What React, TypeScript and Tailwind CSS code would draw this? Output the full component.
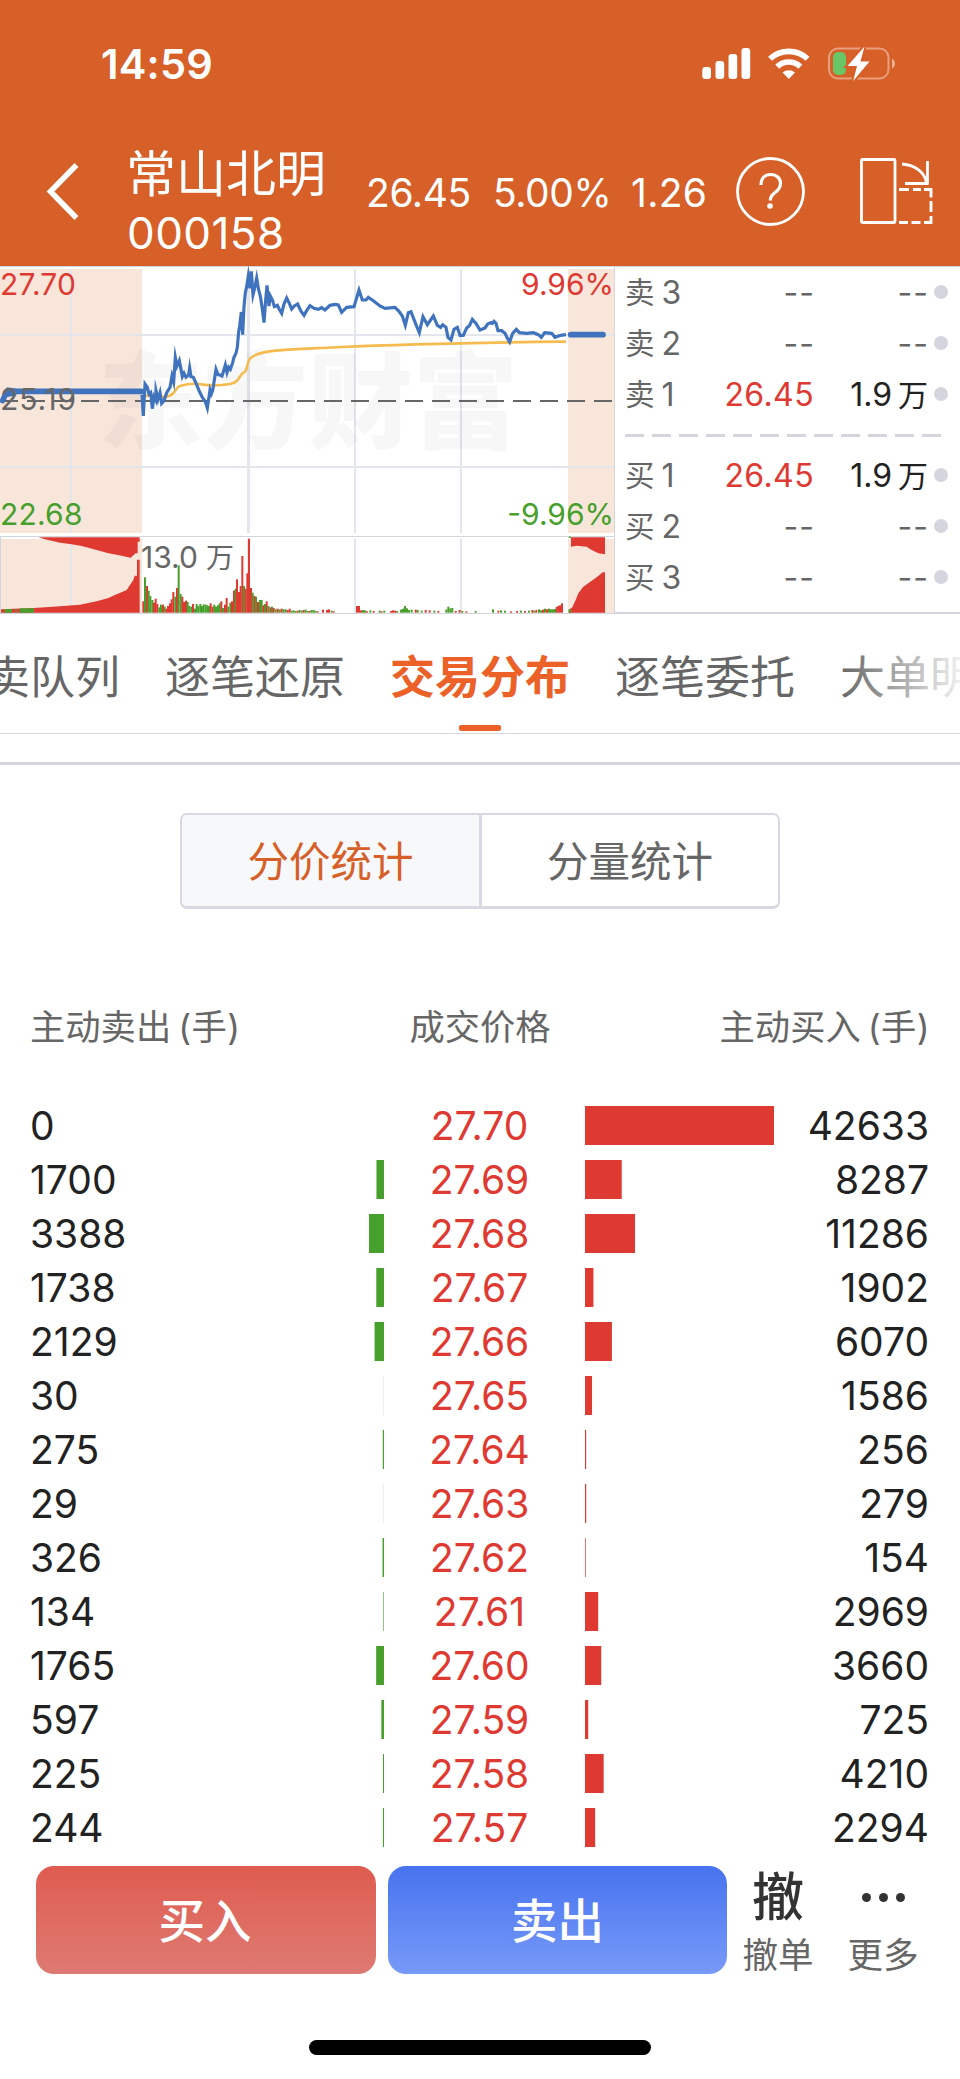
const rows: [number, string, number][] = [
  [0, "27.70", 42633],
  [1700, "27.69", 8287],
  [3388, "27.68", 11286],
  [1738, "27.67", 1902],
  [2129, "27.66", 6070],
  [30, "27.65", 1586],
  [275, "27.64", 256],
  [29, "27.63", 279],
  [326, "27.62", 154],
  [134, "27.61", 2969],
  [1765, "27.60", 3660],
  [597, "27.59", 725],
  [225, "27.58", 4210],
  [244, "27.57", 2294],
];

const MAX_VOLUME = 42633;
const BAR_WIDTH = 189;

const RED = "#df3a32";
const GREEN = "#479f2c";
const GRID = "#e4e6ee";

function StatusBar() {
  return (
    <div className="flex h-[128px] items-center pl-[101px] pr-[64px]">
      <span className="pt-[2px] text-[41.5px] font-semibold leading-none tracking-[0.2px]">14:59</span>
      <svg className="ml-auto" width="196" height="36" viewBox="700 46 196 36" fill="#fff">
        <rect x="702.300" y="67" width="8.700" height="12" rx="3" />
        <rect x="715.500" y="61" width="8.700" height="18" rx="3" />
        <rect x="728.500" y="54" width="8.700" height="25" rx="3" />
        <rect x="741.500" y="48" width="8.700" height="31" rx="3" />
        <g fill="none" stroke="#fff" strokeWidth="5.6">
          <path d="M770 58.8a27.4 27.4 0 0 1 37.6 0" />
          <path d="M777.2 66.6a17 17 0 0 1 23.2 0" />
        </g>
        <path d="M782.6 72.6a9.3 9.3 0 0 1 12.4 0L788.8 79z" />
        <rect x="829" y="48.5" width="59.5" height="30" rx="9" fill="none" stroke="#fff" strokeOpacity=".4" strokeWidth="2" />
        <path d="M892 58.500c4 2 4 8 0 10z" fillOpacity=".5" />
        <rect x="833" y="52" width="13" height="23" rx="5" fill="#68c667" />
        <path d="M864.500 46.500 847.500 66h9.500l-3.800 15L869.500 61.500h-9z" stroke="#d75f28" strokeWidth="4" />
        <path d="M864.500 46.500 847.500 66h9.500l-3.800 15L869.500 61.500h-9z" />
      </svg>
    </div>
  );
}

function TitleBar() {
  return (
    <div className="flex h-[127px] items-center">
      <svg className="ml-[46px]" width="34" height="58" viewBox="0 0 34 58" fill="none" stroke="#fff" strokeWidth="5.5">
        <path d="M30.500 2 4.500 28.500l26 26.500" />
      </svg>
      <div className="ml-[46px] mt-[22px] flex w-[240px] flex-col">
        <span className="h-[61px] text-[50px] leading-[62px]">常山北明</span>
        <span className="h-[58px] pl-[1px] text-[44px] leading-[58px] tracking-[0.4px]">000158</span>
      </div>
      <div className="mt-[2px] flex w-[368px] text-[39px] leading-none tracking-[-0.4px]">
        <span className="w-[127px]">26.45</span>
        <span className="w-[138px]">5.00%</span>
        <span className="tracking-[0.3px]">1.26</span>
      </div>
      <svg className="-mt-[1px]" width="200" height="76" viewBox="734 153 200 76" fill="none" stroke="#fff" strokeWidth="2.800">
        <circle cx="770.500" cy="191.500" r="33" />
        <path strokeWidth="3.200" d="M761 185c0-6.500 4-10.500 9.700-10.500 5.800 0 9.800 3.600 9.800 9 0 4.500-2.300 6.800-5.700 9.300-3.500 2.600-4.500 4.200-4.500 7.700" />
        <circle cx="770" cy="206" r="2.800" fill="#fff" stroke="none" />
        <rect x="861.500" y="159.500" width="33.500" height="63" rx="1" />
        <path d="M902 164c14 1 23 9 24.500 19M927.500 161v22.500M905 183.500h23.500" />
        <path d="M899 189.500h10M913 189.500h8M924 189.500h7v8M931 201v11M931 216v6.500h-7M899 222.500h9M911.500 222.500h9" />
      </svg>
    </div>
  );
}

const priceLine =
  "426,404 430,468 435,372 442,382 447,402 452,398 457,446 462,410 467,420 468,392 474,418 480,398 485,430 492,422 500,398 510,382 516,348 521,366 526,292 531,318 538,302 547,350 552,340 558,352 566,345 569,324 573,350 580,352 590,374 598,394 607,412 616,425 622,444 630,390 634,402 638,392 648,328 654,344 660,345 666,348 671,332 676,315 681,338 686,322 691,328 698,308 702,292 708,280 712,262 716,215 719,198 724,156 728,224 732,140 736,98 740,80 745,48 750,85 754,34 759,104 765,80 770,54 776,90 781,108 786,140 792,188 797,120 801,76 807,138 811,108 818,122 823,140 832,136 838,148 845,160 852,132 860,114 868,130 875,147 883,138 893,132 902,152 912,166 920,152 930,137 942,145 955,148 965,143 975,150 990,136 1005,133 1015,135 1025,157 1040,142 1062,140 1077,90 1087,120 1098,120 1105,112 1120,122 1140,138 1155,145 1185,142 1197,154 1207,168 1216,196 1225,158 1233,155 1248,194 1258,218 1269,170 1282,194 1300,168 1312,196 1322,202 1328,194 1338,202 1344,232 1353,240 1362,208 1372,202 1380,226 1390,226 1400,204 1409,196 1417,178 1428,190 1440,210 1455,204 1463,192 1472,188 1477,190 1482,184 1488,190 1494,212 1505,212 1515,220 1523,236 1529,246 1538,220 1549,208 1558,218 1580,220 1600,218 1615,224 1624,232 1634,218 1655,220 1665,232 1682,226 1698,224";

const averageLine =
  "M438,408C455,404 480,414 500,410C530,404 524,382 540,378C560,372 590,370 610,374C640,378 665,376 690,372C725,364 712,346 736,334C745,318 740,306 750,296C775,272 830,270 960,264C1060,260 1200,250 1698,245";

const volumeBars: [number, number, "r" | "g"][] = [
  [427, 34, "r"], [432, 106, "g"], [438, 80, "r"], [443, 66, "g"], [448, 50, "g"], [454, 38, "g"], [459, 30, "r"], [464, 42, "r"], [469, 26, "r"],
  [475, 16, "g"], [480, 24, "g"], [486, 24, "r"], [491, 18, "g"], [496, 12, "r"], [501, 20, "r"], [507, 28, "r"], [512, 40, "r"], [517, 62, "r"],
  [523, 48, "g"], [528, 74, "r"], [533, 142, "g"], [539, 56, "g"], [544, 48, "r"], [549, 32, "r"], [555, 36, "r"], [560, 32, "g"], [565, 20, "g"],
  [571, 18, "g"], [576, 26, "r"], [582, 12, "g"], [587, 26, "g"], [592, 20, "g"], [598, 26, "g"], [603, 20, "g"], [608, 25, "g"], [614, 24, "g"],
  [619, 22, "g"], [624, 20, "g"], [629, 28, "r"], [635, 18, "r"], [640, 24, "g"], [645, 18, "g"], [651, 22, "g"], [656, 28, "g"], [661, 34, "r"],
  [666, 14, "g"], [672, 24, "r"], [677, 44, "r"], [682, 18, "g"], [688, 30, "g"], [693, 34, "r"], [699, 66, "r"], [704, 72, "g"], [708, 100, "r"],
  [714, 62, "r"], [719, 80, "r"], [724, 170, "r"], [729, 80, "g"], [734, 72, "r"], [739, 118, "r"], [744, 222, "r"], [750, 74, "r"], [755, 60, "g"],
  [760, 50, "r"], [765, 48, "g"], [771, 32, "r"], [777, 38, "g"], [782, 38, "g"], [787, 22, "r"], [792, 26, "g"], [797, 34, "r"], [802, 20, "g"],
  [808, 16, "r"], [813, 18, "g"], [818, 14, "r"], [824, 10, "g"], [830, 12, "r"], [836, 10, "g"], [842, 12, "r"], [848, 10, "g"], [854, 10, "g"],
  [860, 8, "r"], [866, 12, "r"], [872, 6, "g"], [878, 7, "g"], [884, 5, "g"], [890, 6, "r"], [896, 8, "g"], [902, 6, "g"], [908, 8, "r"],
  [914, 9, "g"], [920, 5, "g"], [926, 5, "r"], [932, 8, "g"], [938, 8, "g"], [944, 5, "g"], [950, 4, "r"], [966, 9, "r"], [978, 8, "r"],
  [984, 10, "r"], [992, 6, "g"], [998, 4, "r"], [1068, 20, "r"], [1074, 20, "r"], [1080, 7, "r"], [1086, 8, "g"], [1092, 7, "g"], [1098, 4, "r"],
  [1108, 7, "g"], [1118, 5, "r"], [1136, 6, "g"], [1142, 4, "r"], [1150, 6, "g"], [1170, 5, "r"], [1176, 7, "r"], [1182, 6, "r"], [1188, 5, "g"],
  [1200, 9, "g"], [1206, 12, "g"], [1212, 20, "g"], [1218, 13, "g"], [1224, 8, "g"], [1232, 9, "g"], [1244, 9, "r"], [1250, 8, "g"], [1262, 6, "g"],
  [1274, 8, "r"], [1286, 7, "r"], [1300, 6, "g"], [1312, 5, "r"], [1336, 9, "g"], [1342, 18, "g"], [1348, 13, "g"], [1354, 14, "g"], [1364, 5, "r"],
  [1376, 8, "r"], [1384, 5, "g"], [1396, 4, "r"], [1424, 5, "g"], [1476, 10, "g"], [1492, 6, "r"], [1500, 7, "g"], [1512, 6, "g"], [1530, 4, "r"],
  [1548, 5, "r"], [1560, 6, "g"], [1572, 5, "r"], [1584, 6, "g"], [1594, 8, "r"], [1600, 6, "g"], [1606, 8, "r"], [1614, 10, "g"], [1620, 7, "g"],
  [1626, 9, "r"], [1632, 12, "g"], [1638, 10, "r"], [1644, 12, "g"], [1650, 10, "g"], [1656, 10, "g"], [1662, 11, "g"], [1667, 17, "r"], [1672, 20, "r"],
  [1677, 22, "r"], [1683, 28, "r"],
];

function Chart() {
  return (
    <svg className="block shrink-0 font-['Inter','Noto_Sans_CJK_SC',sans-serif]" width="615" height="348" viewBox="0 266 615 348">
      <rect x="0" y="269" width="142" height="264" fill="#f8e6db" />
      <rect x="1" y="539" width="141" height="74" fill="#f8e6db" />
      <rect x="568" y="269" width="46" height="264" fill="#f8e6db" />
      <rect x="568" y="539" width="46" height="74" fill="#f8e6db" />
      <g stroke={GRID} strokeWidth="2">
        <path d="M71 269v264M71 539v74M355 269v264M355 539v74M461 269v264M461 539v74M0 335h614M0 467h614" />
        <path strokeWidth="3" d="M248.500 269v264M248.500 539v74" />
      </g>
      <path d="M0 266.500h615M0 536.500h614M614.500 266v348M.5 536v77M0 613.500h615" stroke="#d4d5dd" fill="none" />
      <text x="98" y="440" fontSize="105" fontWeight="900" fill="#000" fillOpacity=".032">东方财富</text>
      <path d="M0 401h612" stroke="#666" strokeWidth="2" strokeDasharray="18 9" />
      <g transform="translate(0 260) scale(.33333)">
        <path d={averageLine} fill="none" stroke="#f5bb4f" strokeWidth="8" />
        <polyline points={priceLine} fill="none" stroke="#4073be" strokeWidth="9.500" strokeLinejoin="miter" strokeMiterlimit="8" />
        <path d="M8 422 16 404 24 391 50 394H424" fill="none" stroke="#4073be" strokeWidth="17" strokeLinecap="round" strokeLinejoin="round" />
        <path d="M22 386 46 392V404L20 408Z" fill="#4073be" stroke="#4073be" strokeWidth="6" strokeLinejoin="round" />
        <path d="M1712 224H1809" stroke="#4073be" strokeWidth="17" strokeLinecap="round" />
        <g fill={RED}>
          <path d="M115 832H419V845H413V880H407L392 893 350 884 325 880 290 870 245 858 210 852 180 848 135 838Z" />
          <path d="M3 1058V1048L102 1044 180 1039 240 1034 290 1024 325 1014 350 1003 380 990 390 975 400 960 404 947H411V899H419V1058Z" />
          <path d="M1713 832H1815V883L1795 880 1775 870 1760 860 1730 857 1713 860Z" />
          <path d="M1706 1058V1050L1717 1042 1726 1022 1735 1000 1750 980 1770 966 1792 950 1808 937H1815V1058Z" />
        </g>
        <g fill={GREEN}>
          <rect x="14" y="1047" width="22" height="11" />
          <rect x="46" y="1047" width="4" height="11" />
          <rect x="59" y="1045" width="43" height="13" />
          <rect x="1706" y="830" width="7" height="4" />
          <rect x="1706" y="1048" width="7" height="10" />
        </g>
        {volumeBars.map(([x, h, c]) => (
          <rect key={x} x={x} y={1058 - h} width="6" height={h} fill={c === "r" ? RED : GREEN} />
        ))}
      </g>
      <g fontSize="30">
        <text x="0" y="295" fill={RED} letterSpacing=".2">27.70</text>
        <text x="0" y="410" fill="#666" letterSpacing=".9">25.19</text>
        <text x="0" y="525" fill={GREEN} letterSpacing=".2">22.68</text>
        <text x="614" y="295" fill={RED} textAnchor="end">9.96%</text>
        <text x="614" y="525" fill={GREEN} textAnchor="end">-9.96%</text>
        <text x="141" y="568" fill="#666">13.0</text>
        <text x="206" y="568" fontSize="28" fill="#666">万</text>
      </g>
    </svg>
  );
}

function Quote({ side, level, active }: { side: string; level: number; active?: boolean }) {
  return (
    <div className="flex h-[51px] items-center text-[32px] leading-none text-[#666]">
      <span className="flex w-[72px] items-center gap-[7px]">
        <span className="text-[29.5px]">{side}</span>
        <span>{level}</span>
      </span>
      {active ? (
        <>
          <span className="w-[117px] text-right tracking-[0.4px] text-[#df3a32]">26.45</span>
          <span className="flex w-[114px] items-center justify-end gap-[6px] text-[#222]">
            <span>1.9</span>
            <span className="text-[30px]">万</span>
          </span>
        </>
      ) : (
        <>
          <span className="w-[118px] text-right tracking-[1px]">--</span>
          <span className="w-[114px] text-right tracking-[1px]">--</span>
        </>
      )}
      <span className={active ? "-mt-[1px] ml-[6px] size-[14px] rounded-full bg-[#d4d5dd]" : "-mt-[1px] ml-[5px] size-[14px] rounded-full bg-[#d4d5dd]"} />
    </div>
  );
}

function OrderBook() {
  return (
    <div className="grow border-b-2 border-t border-b-[#d4d5dd] border-t-[#d4d5dd] pl-[10px]">
      <Quote side="卖" level={3} />
      <Quote side="卖" level={2} />
      <Quote side="卖" level={1} active />
      <svg className="block" width="320" height="30" viewBox="0 0 320 30">
        <path d="M0 15.500h316" stroke="#d4d5dd" strokeWidth="3" strokeDasharray="19 8" />
      </svg>
      <Quote side="买" level={1} active />
      <Quote side="买" level={2} />
      <Quote side="买" level={3} />
    </div>
  );
}

function Tabs() {
  return (
    <nav className="relative h-[120px] overflow-hidden border-b border-[#d6d8d8]">
      <div className="-ml-[60px] flex gap-[45px] whitespace-nowrap text-[45px] leading-[128px] text-[#666]">
        <span>买卖队列</span>
        <span>逐笔还原</span>
        <span className="flex flex-col items-center font-bold text-[#eb6128]">
          交易分布
          <span className="-mt-[17px] h-[6px] w-[42px] rounded-[2px] bg-[#eb6128]" />
        </span>
        <span>逐笔委托</span>
        <span>大单明细</span>
      </div>
      <div className="absolute inset-y-0 right-0 w-[120px] bg-gradient-to-r from-white/0 to-white/90" />
    </nav>
  );
}

function Bar({ value, side }: { value: number; side: "sell" | "buy" }) {
  const width = (value / MAX_VOLUME) * BAR_WIDTH;
  return (
    <svg width={BAR_WIDTH} height="39" className="block shrink-0">
      <rect x={side === "sell" ? BAR_WIDTH - width : 0} width={width} height="39" fill={side === "sell" ? GREEN : RED} />
    </svg>
  );
}

function Distribution() {
  return (
    <section>
      <div className="grid h-[72px] grid-cols-3 items-center px-[30px] pt-[1px] text-[35.3px] leading-none text-[#666]">
        <span>主动卖出<span className="ml-[7px] tracking-[0.4px]">(手)</span></span>
        <span className="text-center">成交价格</span>
        <span className="text-right">主动买入<span className="ml-[7px] tracking-[0.4px]">(手)</span></span>
      </div>
      <div className="mt-[35px]">
        {rows.map(([sell, price, buy]) => (
          <div key={price} className="flex h-[54px] items-center pl-[30px] pr-[31px] text-[39px] leading-none text-[#222]">
            <span className="w-[165px]">{sell}</span>
            <Bar value={sell} side="sell" />
            <span className="w-[191px] text-center text-[#df3a32]">{price}</span>
            <span className="w-[10px]" />
            <Bar value={buy} side="buy" />
            <span className="grow text-right">{buy}</span>
          </div>
        ))}
      </div>
    </section>
  );
}

function Footer() {
  return (
    <footer className="mt-[12px] flex h-[108px] pl-[36px] text-white">
      <button className="w-[340px] rounded-[18px] bg-gradient-to-b from-[#df5b4f] to-[#de7a73] pr-[2px] pt-[3px] text-[46.5px] font-medium">买入</button>
      <button className="ml-[12px] w-[339px] rounded-[18px] bg-gradient-to-b from-[#4873ef] to-[#7799f8] pt-[3px] text-[46.5px] font-medium">卖出</button>
      <div className="ml-[15px] flex w-[72px] flex-col items-center text-[#333]">
        <span className="h-[77px] text-[52px] font-medium leading-[64px]">撤</span>
        <span className="text-[35.5px] leading-[36px] text-[#666]">撤单</span>
      </div>
      <div className="ml-[33px] flex w-[72px] flex-col items-center">
        <span className="flex h-[77px] gap-[8px] pt-[27px]">
          <i className="size-[9px] rounded-full bg-[#333]" />
          <i className="size-[9px] rounded-full bg-[#333]" />
          <i className="size-[9px] rounded-full bg-[#333]" />
        </span>
        <span className="text-[35.5px] leading-[36px] text-[#666]">更多</span>
      </div>
    </footer>
  );
}

export default function App() {
  return (
    <div className="h-[2079px] w-[960px] overflow-hidden bg-white font-['Inter','Noto_Sans_CJK_SC',sans-serif]">
      <header className="h-[266px] bg-[#d75f28] text-white">
        <StatusBar />
        <TitleBar />
      </header>
      <div className="flex h-[348px]">
        <Chart />
        <OrderBook />
      </div>
      <Tabs />
      <div className="h-[31px] border-b-[3px] border-[#d4d5dd]" />
      <div className="mx-auto mt-[48px] flex h-[96px] w-[600px] rounded-[7px] border-2 border-b-[3px] border-[#d9dae1] text-[41.5px] text-[#666]">
        <button className="w-[300px] shrink-0 rounded-l-[5px] border-r-[3px] border-[#d9dae1] bg-[#f7f8fa] pt-[4px] text-[#d75f28]">分价统计</button>
        <button className="grow pt-[4px]">分量统计</button>
      </div>
      <div className="h-[82px]" />
      <Distribution />
      <Footer />
      <div className="mx-auto mt-[66px] h-[15px] w-[342px] rounded-full bg-black" />
    </div>
  );
}
